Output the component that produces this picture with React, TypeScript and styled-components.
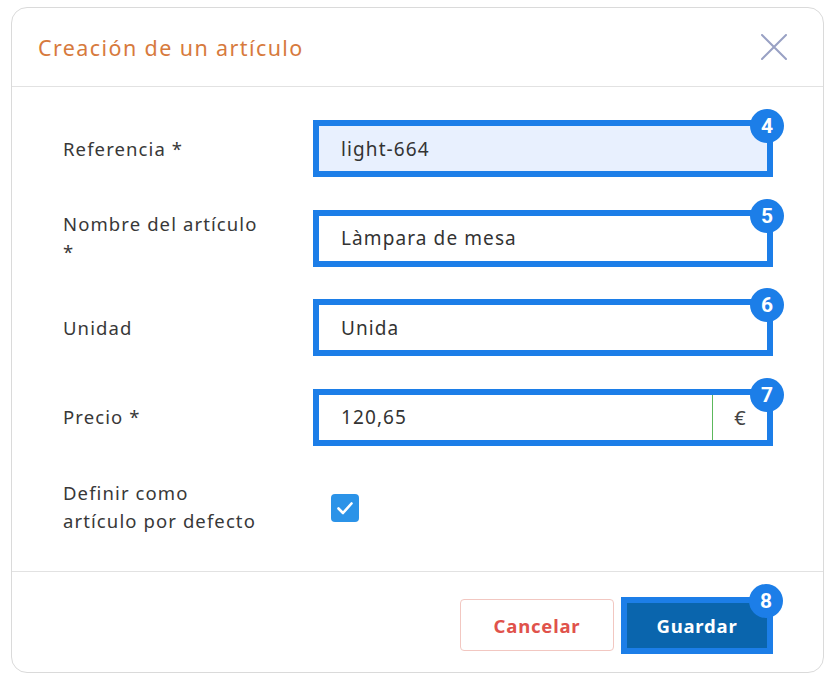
import React from 'react'
import styled, { createGlobalStyle } from 'styled-components'

const GlobalStyle = createGlobalStyle`
  html, body {
    margin: 0;
    padding: 0;
    background: #ffffff;
  }
  body {
    font-family: 'Noto Sans', 'Open Sans', sans-serif;
    color: #383838;
  }
  * { box-sizing: border-box; }
`

const annotation = '#1c7ee8'

const Page = styled.div`
  height: 679px;
  padding: 7px 10px 6px 11px;
`

const Dialog = styled.div`
  height: 100%;
  border: 1px solid #dadada;
  border-radius: 16px;
  display: flex;
  flex-direction: column;
`

const Header = styled.div`
  height: 79px;
  padding: 0 36px 0 26px;
  border-bottom: 1px solid #e2e2e2;
  display: flex;
  align-items: center;
  justify-content: space-between;
`

const Title = styled.h2`
  margin: 0;
  font-size: 21.5px;
  font-weight: 400;
  color: #d77a3d;
  letter-spacing: 1.4px;
`

const CloseButton = styled.button`
  width: 26px;
  height: 26px;
  padding: 0;
  border: 0;
  background: none;
  display: flex;
  align-items: center;
  justify-content: center;
`

const Body = styled.div`
  flex: 1;
  padding: 39px 56px 0 51px;
  display: flex;
  flex-direction: column;
  gap: 44.5px;
`

const Row = styled.div`
  height: 45px;
  display: flex;
  align-items: center;
`

const Label = styled.label`
  width: 256px;
  flex: none;
  padding-right: 54px;
  font-size: 18.5px;
  line-height: 28px;
  letter-spacing: 1.1px;
`

const Field = styled.div<{ $filled?: boolean }>`
  position: relative;
  flex: 1;
  height: 45px;
  display: flex;
  background: ${p => (p.$filled ? '#e8f0fe' : '#ffffff')};
  outline: 6px solid ${annotation};
`

const Input = styled.input`
  flex: 1;
  min-width: 0;
  height: 100%;
  border: 0;
  background: transparent;
  padding: 0 0 0 22px;
  font-family: inherit;
  font-size: 19px;
  letter-spacing: 1.1px;
  color: #333333;
  outline: none;
`

const Addon = styled.span`
  width: 55px;
  flex: none;
  border-left: 1px solid #5cb85c;
  display: flex;
  align-items: center;
  justify-content: center;
  font-size: 20px;
  color: #444444;
`

const Badge = styled.span<{ $top?: number }>`
  position: absolute;
  top: ${p => p.$top ?? -17}px;
  right: -17px;
  width: 34px;
  height: 34px;
  border-radius: 50%;
  background: ${annotation};
  color: #ffffff;
  font-family: Roboto, 'Liberation Sans', sans-serif;
  font-weight: 700;
  font-size: 21px;
  letter-spacing: 0;
  display: flex;
  align-items: center;
  justify-content: center;
  z-index: 2;
`

const CheckBox = styled.span`
  margin-left: 12px;
  margin-top: 3px;
  width: 28px;
  height: 28px;
  border-radius: 4px;
  background: #2b93e8;
  display: flex;
  align-items: center;
  justify-content: center;
`

const Footer = styled.div`
  height: 101px;
  border-top: 1px solid #e2e2e2;
  padding: 0 56px 0 0;
  display: flex;
  align-items: center;
  justify-content: flex-end;
  gap: 13px;
`

const Button = styled.button<{ $primary?: boolean }>`
  position: relative;
  height: ${p => (p.$primary ? 45 : 52)}px;
  width: ${p => (p.$primary ? 140 : 154)}px;
  margin-top: 6px;
  font-family: inherit;
  font-size: 18.5px;
  font-weight: 700;
  letter-spacing: 0.8px;
  border: 1px solid ${p => (p.$primary ? '#0a65ad' : '#f2c7c1')};
  background: ${p => (p.$primary ? '#0a65ad' : '#ffffff')};
  color: ${p => (p.$primary ? '#ffffff' : '#e0524b')};
  outline: ${p => (p.$primary ? `6px solid ${annotation}` : 'none')};
  border-radius: ${p => (p.$primary ? 0 : 4)}px;
`

const fields = [
  { label: 'Referencia *', value: 'light-664', badge: 4, filled: true },
  { label: 'Nombre del artículo *', value: 'Làmpara de mesa', badge: 5 },
  { label: 'Unidad', value: 'Unida', badge: 6 },
]

const App = () => (
  <>
    <GlobalStyle />
    <Page>
      <Dialog>
        <Header>
          <Title>Creación de un artículo</Title>
          <CloseButton aria-label='Cerrar'>
            <svg width='26' height='26' viewBox='0 0 26 26'>
              <path d='M1 1 L25 25 M25 1 L1 25' stroke='#99a1c4' strokeWidth='2' strokeLinecap='round' />
            </svg>
          </CloseButton>
        </Header>
        <Body>
          {fields.map(f => (
            <Row key={f.badge}>
              <Label>{f.label}</Label>
              <Field $filled={f.filled}>
                <Input defaultValue={f.value} />
                <Badge>{f.badge}</Badge>
              </Field>
            </Row>
          ))}
          <Row>
            <Label>Precio *</Label>
            <Field>
              <Input defaultValue='120,65' />
              <Addon>€</Addon>
              <Badge>7</Badge>
            </Field>
          </Row>
          <Row>
            <Label>Definir como artículo por defecto</Label>
            <CheckBox>
              <svg width='20' height='20' viewBox='0 0 20 20'>
                <path d='M3.5 10.5 L8 15 L16.5 5.5' fill='none' stroke='#ffffff' strokeWidth='2.6' strokeLinecap='round' strokeLinejoin='round' />
              </svg>
            </CheckBox>
          </Row>
        </Body>
        <Footer>
          <Button>Cancelar</Button>
          <Button $primary>
            Guardar
            <Badge $top={-20}>8</Badge>
          </Button>
        </Footer>
      </Dialog>
    </Page>
  </>
)

export default App
